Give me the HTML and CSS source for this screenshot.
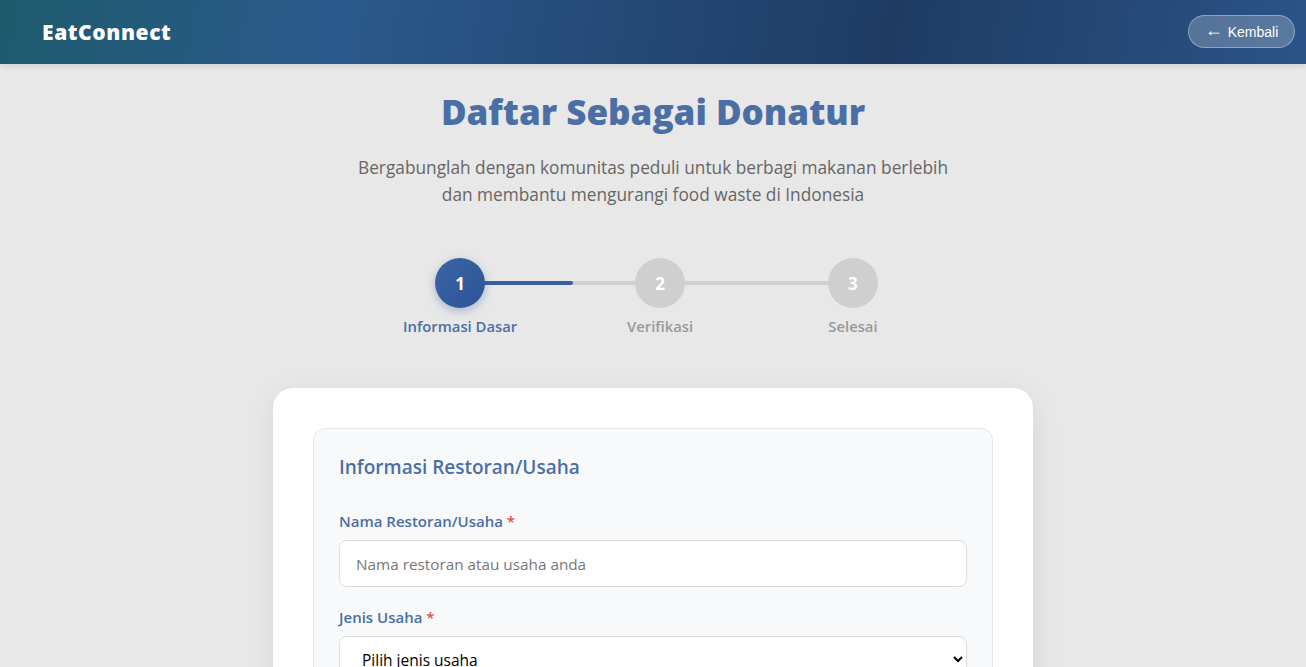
FILE: index.html
```html
<!DOCTYPE html>
<html lang="id">
<head>
<meta charset="utf-8">
<title>EatConnect - Daftar Donatur</title>
<link rel="stylesheet" href="styles.css">
</head>
<body>
<header class="topbar">
  <div class="logo">EatConnect</div>
  <a class="back-btn" href="#"><span class="arrow">←</span> Kembali</a>
</header>
<main class="page">
  <h1 class="title">Daftar Sebagai Donatur</h1>
  <p class="subtitle">Bergabunglah dengan komunitas peduli untuk berbagi makanan berlebih<br>dan membantu mengurangi food waste di Indonesia</p>

  <div class="stepper">
    <div class="step-line"><div class="step-progress"></div></div>
    <div class="step active">
      <div class="step-circle">1</div>
      <div class="step-label">Informasi Dasar</div>
    </div>
    <div class="step">
      <div class="step-circle">2</div>
      <div class="step-label">Verifikasi</div>
    </div>
    <div class="step">
      <div class="step-circle">3</div>
      <div class="step-label">Selesai</div>
    </div>
  </div>

  <div class="card">
    <section class="form-section">
      <h3 class="section-title">Informasi Restoran/Usaha</h3>
      <div class="form-group">
        <label class="form-label">Nama Restoran/Usaha <span class="req">*</span></label>
        <input class="form-input" type="text" placeholder="Nama restoran atau usaha anda">
      </div>
      <div class="form-group">
        <label class="form-label">Jenis Usaha <span class="req">*</span></label>
        <select class="form-input form-select">
          <option>Pilih jenis usaha</option>
        </select>
      </div>
    </section>
  </div>
</main>
</body>
</html>
```

FILE: styles.css
```css
* { box-sizing: border-box; }
html, body { margin: 0; padding: 0; }
body {
  background: #e8e8e8;
  font-family: "Open Sans", "Noto Sans", sans-serif;
  color: #333;
}
.topbar {
  height: 64px;
  display: flex;
  align-items: center;
  justify-content: space-between;
  padding: 0 11px 0 42px;
  background: linear-gradient(100deg, #1e5a6c 0%, #2a5a8c 25%, #1f3b64 68%, #2a5487 100%);
  box-shadow: 0 2px 6px rgba(0,0,0,0.1);
}
.logo {
  color: #fff;
  font-weight: 800;
  font-size: 21px;
  letter-spacing: 0.6px;
}
.back-btn {
  display: inline-flex;
  align-items: center;
  justify-content: center;
  gap: 5px;
  height: 33px;
  width: 107px;
  margin-top: -1px;
  border-radius: 20px;
  background: rgba(255,255,255,0.22);
  border: 1px solid rgba(255,255,255,0.35);
  color: #fff;
  text-decoration: none;
  font-family: "Liberation Sans", Arial, sans-serif;
  font-size: 14px;
}
.arrow {
  font-family: "Liberation Sans", Arial, sans-serif;
  font-size: 18px;
  line-height: 1;
  margin-top: -4px;
}
.page {
  display: flex;
  flex-direction: column;
  align-items: center;
  padding-top: 24px;
}
.title {
  margin: 0;
  font-size: 35px;
  line-height: 48px;
  font-weight: 800;
  color: #4a6fa5;
}
.subtitle {
  margin: 18px 0 0;
  text-align: center;
  font-size: 17.3px;
  line-height: 27px;
  color: #666;
}
.stepper {
  position: relative;
  width: 500px;
  display: flex;
  justify-content: space-between;
  margin-top: 50px;
}
.step-line {
  position: absolute;
  left: 50px;
  right: 50px;
  top: 23px;
  height: 4px;
  background: #d0d0d0;
  border-radius: 2px;
}
.step-progress {
  width: 30%;
  height: 100%;
  background: #3a5f9f;
  border-radius: 2px;
}
.step {
  position: relative;
  min-width: 100px;
  display: flex;
  flex-direction: column;
  align-items: center;
}
.step-circle {
  width: 50px;
  height: 50px;
  border-radius: 50%;
  background: #cfcfcf;
  color: #fff;
  font-weight: 700;
  font-size: 17px;
  display: flex;
  align-items: center;
  justify-content: center;
}
.step.active .step-circle {
  background: linear-gradient(135deg, #3b64a6, #2c5597);
  box-shadow: 0 3px 10px rgba(44,85,151,0.35);
}
.step-label {
  margin-top: 8px;
  font-size: 14.8px;
  line-height: 20px;
  font-weight: 600;
  color: #999;
  white-space: nowrap;
}
.step.active .step-label { color: #4a6fa5; }
.card {
  margin-top: 52px;
  width: 760px;
  background: #fff;
  border-radius: 20px;
  padding: 40px;
  box-shadow: 0 8px 30px rgba(0,0,0,0.08);
  min-height: 400px;
}
.form-section {
  background: #f8f9fb;
  border: 1px solid #e4e7eb;
  border-radius: 12px;
  padding: 24px 25px 25px;
}
.section-title {
  margin: 0 0 30px;
  font-size: 19px;
  line-height: 28px;
  font-weight: 600;
  color: #4a6fa5;
}
.form-group { margin-bottom: 20px; }
.form-label {
  display: block;
  font-size: 15px;
  line-height: 21px;
  font-weight: 600;
  color: #4a6fa5;
  margin-bottom: 8px;
}
.req { color: #e74c3c; }
.form-input {
  display: block;
  width: 100%;
  height: 47px;
  padding: 0 16px;
  border: 1px solid #dcdcdc;
  border-radius: 8px;
  background: #fff;
  font-family: "Open Sans", "Noto Sans", sans-serif;
  font-size: 15.3px;
  color: #333;
}
.form-input::placeholder { color: #777; }
.form-select {
  padding: 0 14px 0 18px;
  color: #000;
  font-size: 15.5px;
}
```
